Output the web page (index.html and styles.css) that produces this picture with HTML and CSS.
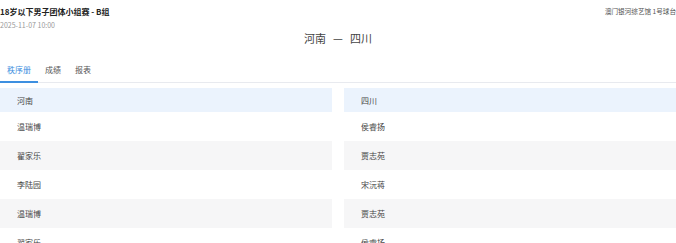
FILE: index.html
```html
<!DOCTYPE html>
<html lang="zh">
<head>
<meta charset="utf-8">
<link rel="stylesheet" href="styles.css">
</head>
<body>
<div class="page">
  <div class="top">
    <div class="info">
      <div class="title">18岁以下男子团体小组赛 - B组</div>
      <div class="date">2025-11-07 10:00</div>
    </div>
    <div class="venue">澳门银河综艺馆 1号球台</div>
  </div>
  <div class="matchup"><span>河南</span><span>—</span><span>四川</span></div>
  <div class="tabs">
    <div class="tab active">秩序册</div>
    <div class="tab">成绩</div>
    <div class="tab">报表</div>
  </div>
  <div class="grid">
    <div class="col">
      <div class="row head">河南</div>
      <div class="row">温瑞博</div>
      <div class="row alt">翟家乐</div>
      <div class="row">李陆园</div>
      <div class="row alt">温瑞博</div>
      <div class="row">翟家乐</div>
    </div>
    <div class="col">
      <div class="row head">四川</div>
      <div class="row">侯睿扬</div>
      <div class="row alt">贾志苑</div>
      <div class="row">宋沅蒋</div>
      <div class="row alt">贾志苑</div>
      <div class="row">侯睿扬</div>
    </div>
  </div>
</div>
</body>
</html>
```

FILE: styles.css
```css
html, body {
  margin: 0;
  padding: 0;
  background: #ffffff;
}
body {
  font-family: "Noto Sans CJK SC", "Noto Sans", sans-serif;
  color: #333333;
  overflow: hidden;
}
.page {
  width: 676px;
  padding-top: 6px;
}
.top {
  display: flex;
  justify-content: space-between;
  align-items: flex-start;
}
.title {
  font-size: 8px;
  line-height: 11px;
  font-weight: bold;
  color: #222222;
}
.date {
  margin-top: 3.5px;
  font-size: 7px;
  line-height: 9px;
  color: #999999;
}
.venue {
  font-size: 6.6px;
  line-height: 11px;
  color: #555555;
  white-space: nowrap;
}
.matchup {
  margin-top: 1px;
  display: flex;
  justify-content: center;
  gap: 7px;
  font-size: 11px;
  line-height: 14px;
  color: #444444;
}
.tabs {
  margin-top: 20.5px;
  display: flex;
  border-bottom: 1px solid #e8eaef;
}
.tab {
  padding: 0 7px 6px;
  font-size: 8px;
  line-height: 10px;
  color: #555555;
  border-bottom: 2px solid transparent;
  margin-bottom: -1px;
}
.tab.active {
  color: #3d8fe0;
  border-bottom-color: #3d8fe0;
}
.grid {
  margin-top: 5px;
  display: grid;
  grid-template-columns: 332px 1fr;
  column-gap: 12px;
}
.row {
  height: 29px;
  display: flex;
  align-items: center;
  padding-left: 17px;
  font-size: 8px;
  color: #444444;
}
.row.head {
  height: 24px;
  background: #ebf3fd;
}
.row.alt {
  background: #f6f6f7;
}
```
